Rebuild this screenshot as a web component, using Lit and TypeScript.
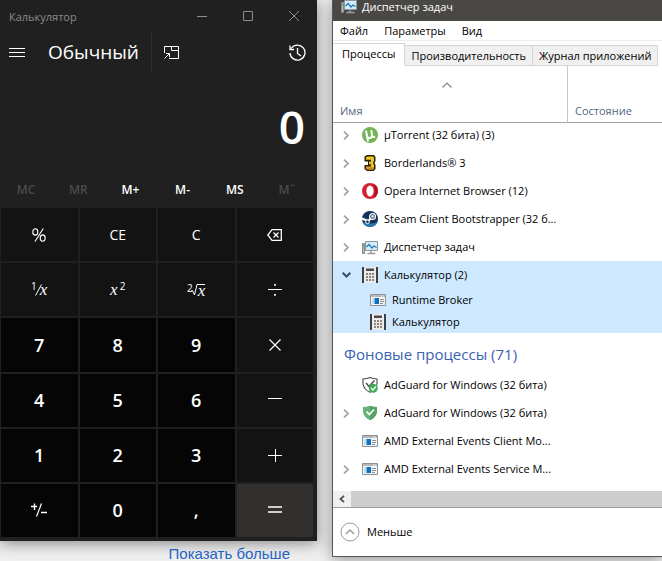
import { LitElement, html, css, svg, TemplateResult } from "lit";
import { customElement, property, state } from "lit/decorators.js";
import { classMap } from "lit/directives/class-map.js";

const FONT = css`"Open Sans", "Noto Sans", sans-serif`;

const reset = css`
  * {
    box-sizing: border-box;
  }
  button {
    margin: 0;
    padding: 0;
    border: 0;
    background: none;
    color: inherit;
    font: inherit;
    display: flex;
    align-items: center;
    justify-content: center;
  }
  svg {
    display: block;
    flex: none;
  }
`;

/* ---------- Calculator glyphs ---------- */

const line = (w: number, h: number, body: TemplateResult) => html`
  <svg width=${w} height=${h} viewBox="0 0 ${w} ${h}" fill="none" stroke="currentColor" aria-hidden="true">${body}</svg>
`;

const glyphs: Record<string, TemplateResult> = {
  backspace: line(15, 12, svg`<path d="M5 .7H14.300V11.300H5L.8 6Z" stroke-width="1.3"/><path d="M6.500 3.500L11.500 8.500M11.500 3.500L6.500 8.500" stroke-width="1.3"/>`),
  divide: line(14, 14, svg`<path d="M0 6.500H14"/><path d="M7 1V2.800M7 11V12.800" stroke-width="1.800"/>`),
  multiply: line(12, 12, svg`<path d="M.5 .5L11.5 11.5M11.5 .5L.5 11.5" stroke-width="1.200"/>`),
  minus: line(14, 14, svg`<path d="M0 5.5H14"/>`),
  plus: line(14, 14, svg`<path d="M0 7.5H14M7.5 1V14"/>`),
  equals: line(14, 14, svg`<path d="M0 4H14M0 9H14" stroke="#d0cecc" stroke-width="2"/>`),
  sign: line(18, 14, svg`<path d="M1 3.5H7M4.500 .5V7" stroke-width="1.400"/><path d="M11.500 .5L6.500 13.5" stroke-width="1.200"/><path d="M11 9.500H17" stroke-width="1.500"/>`),
  percent: line(14, 14, svg`<ellipse cx="3.3" cy="3.900" rx="2.500" ry="3.200" stroke-width="1.100"/><ellipse cx="10.700" cy="10.100" rx="2.500" ry="3.200" stroke-width="1.100"/><path d="M11.300 .5L3 13.500" stroke-width="1.100"/>`),
};

interface Key {
  id: string;
  label: string;
  kind?: "digit" | "equals";
  face: TemplateResult | string;
}

const keys: Key[] = [
  { id: "pct", label: "Процент", face: glyphs.percent },
  { id: "ce", label: "CE", face: "CE" },
  { id: "c", label: "C", face: "C" },
  { id: "back", label: "Удалить", face: glyphs.backspace },
  {
    id: "inv",
    label: "Обратное число",
    face: html`<span class="math"><sup class="tight">1</sup>${line(7, 12, svg`<path d="M6.500 .5L.5 11.5"/>`)}<i class="tucked">x</i></span>`,
  },
  { id: "sq", label: "Квадрат", face: html`<span class="math"><i>x</i><sup class="far">2</sup></span>` },
  {
    id: "root",
    label: "Квадратный корень",
    face: html`<span class="math"><sup class="tight">2</sup>${line(7, 12, svg`<path d="M0 7L1.500 6.500L3.500 11L6 .5H7"/>`)}<i class="under">x</i></span>`,
  },
  { id: "div", label: "Разделить", face: glyphs.divide },
  ...["7", "8", "9"].map((d): Key => ({ id: d, label: d, kind: "digit", face: d })),
  { id: "mul", label: "Умножить", face: glyphs.multiply },
  ...["4", "5", "6"].map((d): Key => ({ id: d, label: d, kind: "digit", face: d })),
  { id: "sub", label: "Вычесть", face: glyphs.minus },
  ...["1", "2", "3"].map((d): Key => ({ id: d, label: d, kind: "digit", face: d })),
  { id: "add", label: "Сложить", face: glyphs.plus },
  { id: "neg", label: "Плюс минус", kind: "digit", face: glyphs.sign },
  { id: "0", label: "0", kind: "digit", face: "0" },
  { id: ",", label: "Запятая", kind: "digit", face: "," },
  { id: "eq", label: "Равно", kind: "equals", face: glyphs.equals },
];

@customElement("calc-window")
export class CalcWindow extends LitElement {
  @state() private value = "0";

  static styles = [
    reset,
    css`
      :host {
        display: flex;
        flex-direction: column;
        background: #202020;
        color: #fff;
        font-family: ${FONT};
        box-shadow: 0 2px 14px rgba(0, 0, 0, 0.45);
      }
      .title {
        display: flex;
        align-items: center;
        height: 32px;
        padding: 0 18px 0 9px;
        color: #8c8c8c;
        font-size: 11px;
      }
      .title span {
        flex: 1;
      }
      .controls {
        display: flex;
        gap: 36px;
      }
      .bar {
        display: flex;
        align-items: center;
        height: 40px;
        padding: 0 11px 0 9px;
      }
      h1 {
        margin: 0 12px 0 23px;
        font-size: 19px;
        line-height: 28px;
        font-weight: 500;
      }
      .pin {
        height: 40px;
        padding: 0 12px;
        border-left: 1px solid #2c2c2c;
      }
      .history {
        margin-left: auto;
      }
      output {
        height: 98px;
        padding: 22px 12px 0 0;
        text-align: right;
        font-size: 46px;
        line-height: 64px;
        font-weight: 600;
      }
      .memory {
        display: grid;
        grid-template-columns: repeat(6, 1fr);
        height: 38px;
        padding-right: 4px;
        font-size: 12px;
        font-weight: 600;
      }
      .memory button:disabled {
        color: #4b4b4b;
      }
      .memory svg {
        margin: 0 0 8px 1px;
      }
      .keys {
        display: grid;
        grid-template-columns: repeat(4, 1fr);
        grid-auto-rows: 1fr;
        gap: 2px;
        height: 333px;
        padding: 0 4px 4px 1px;
      }
      .key {
        background: #131313;
        font-size: 14px;
      }
      .digit {
        background: #050505;
        font-size: 18px;
        font-weight: 600;
      }
      .equals {
        background: #32302f;
      }
      .math {
        display: flex;
        align-items: center;
        line-height: 16px;
      }
      .math i {
        font-family: "Liberation Serif", serif;
        font-size: 17px;
      }
      .math sup {
        align-self: flex-start;
        font-size: 10px;
        line-height: 9px;
      }
      .math .far {
        margin-left: 2px;
      }
      .math .tight {
        margin-right: -2px;
      }
      .math .tucked {
        margin-left: -2px;
      }
      .math .under {
        border-top: 1px solid;
        line-height: 11px;
      }
    `,
  ];

  private press(k: Key) {
    if (/^[\d]$/.test(k.id)) this.value = this.value === "0" ? k.id : this.value + k.id;
    else if (k.id === "," && !this.value.includes(",")) this.value += ",";
    else if (k.id === "c" || k.id === "ce") this.value = "0";
    else if (k.id === "back") this.value = this.value.slice(0, -1) || "0";
  }

  render() {
    return html`
      <header class="title">
        <span>Калькулятор</span>
        <div class="controls">
          <button aria-label="Свернуть">${line(10, 10, svg`<path d="M0 5.5H10"/>`)}</button>
          <button aria-label="Развернуть">${line(10, 10, svg`<path d="M.5 .5H9.5V9.5H.5Z"/>`)}</button>
          <button aria-label="Закрыть">${line(10, 10, svg`<path d="M0 0L10 10M10 0L0 10"/>`)}</button>
        </div>
      </header>
      <div class="bar">
        <button aria-label="Навигация">${line(16, 11, svg`<path d="M0 1.5H16M0 5.5H16M0 9.5H16"/>`)}</button>
        <h1>Обычный</h1>
        <button class="pin" aria-label="Поверх остальных окон">
          ${line(15, 13, svg`<path d="M.5 7V.5H14.5V12.5H5"/><path d="M7.5 .5V4.500H14.5"/><path d="M.5 12.5L5.5 7.5M2 7.5H5.5V11"/>`)}
        </button>
        <button class="history" aria-label="Журнал">
          ${line(17, 17, svg`<path d="M2.2 4.5A7.5 7.5 0 1 1 1 9" stroke-width="1.300"/><path d="M1 1.5V5.5H5M8.5 4V9.5L12 12" stroke-width="1.300"/>`)}
        </button>
      </div>
      <output>${this.value}</output>
      <div class="memory">
        <button disabled>MC</button>
        <button disabled>MR</button>
        <button>M+</button>
        <button>M-</button>
        <button>MS</button>
        <button disabled>M${line(5, 3, svg`<path d="M.5 .5L2.500 2.500L4.500 .5"/>`)}</button>
      </div>
      <div class="keys">
        ${keys.map(
          (k) => html`<button
            class=${classMap({ key: true, digit: k.kind === "digit", equals: k.kind === "equals" })}
            aria-label=${k.label}
            @click=${() => this.press(k)}
          >${k.face}</button>`
        )}
      </div>
    `;
  }
}

/* ---------- Process icons ---------- */

const icon = (body: TemplateResult) => html`<svg width="16" height="16" viewBox="0 0 16 16" aria-hidden="true">${body}</svg>`;

const icons: Record<string, TemplateResult> = {
  utorrent: icon(svg`
    <circle cx="8" cy="8" r="8" fill="#76b355"/>
    <path d="M4 3.5L5 9Q5.5 11.5 8 11Q10.500 10.500 10 8L9.300 3.200M10 8.500Q10.800 10.600 13 9.800M5 9L6 14.500" fill="none" stroke="#fff" stroke-width="2"/>`),
  borderlands: icon(svg`
    <path d="M2.500 1.500L5 0H12L13.500 2V6L12.500 8L13.500 10V14L11.500 16H5L2.500 14V10H6V6.500H2.500Z" fill="#2b2008"/>
    <path d="M4 2.200L5.500 1.500H11L12 2.500V6L10.800 8L12 10V13.500L10.800 14.600H5.500L4 13.500V11.500H9V9.200H7V6.500H9V4.800H4Z" fill="#edc62c"/>
    <path d="M4 12.200H12V13.500L10.800 14.600H5.500L4 13.500Z" fill="#cf8a1a"/>`),
  opera: icon(svg`
    <circle cx="8" cy="8" r="8" fill="#d8202f"/>
    <path d="M11 .6A8 8 0 0 1 11 15.400Q13 12 13 8T11 .6Z" fill="#b3101e"/>
    <ellipse cx="8" cy="8" rx="3.600" ry="5.500" fill="#fff"/>`),
  steam: icon(svg`
    <circle cx="8" cy="8" r="8" fill="#14305c"/>
    <path d="M.8 11A8 8 0 0 0 15.500 11Q8 14 .8 11Z" fill="#2879ae"/>
    <path d="M0 7.500L6 10L10 6.500" fill="none" stroke="#fff" stroke-width="2.200"/>
    <circle cx="10.500" cy="5.500" r="2.900" fill="#14305c" stroke="#fff" stroke-width="1.300"/>
    <circle cx="10.500" cy="5.500" r="1.400" fill="#dfe6ee"/>
    <circle cx="5.500" cy="10.800" r="1.800" fill="#14305c" stroke="#fff"/>`),
  monitor: icon(svg`
    <path d="M.5 4.500H2.500V14.500H.5Z" fill="#b9bdb9" stroke="#868b88"/>
    <path d="M1.500 6V7.500" stroke="#54a060"/>
    <path d="M3.500 2.500H15.500V11.500H3.500Z" fill="#d3ecfb" stroke="#8f9699"/>
    <path d="M4.500 8L7 5.500L10 9L12 7L14.500 8.500" fill="none" stroke="#1b7cb4" stroke-width="1.200"/>
    <path d="M9 12V14M5.500 14.500H13.500" stroke="#9a9f9e" stroke-width="1.400"/>`),
  calculator: icon(svg`
    <path d="M2 0H14V16H2Z" fill="#eeeae7"/>
    <path d="M0 0H2V16H0ZM14 0H16V16H14Z" fill="#3e4247"/>
    <path d="M4 1.500H12V4H4Z" fill="#4c4b4b"/>
    <path d="M4 7H6M7 7H9M10 7H12M4 10H6M7 10H9M10 10H12M4 13H6M7 13H9M10 13H12" stroke="#6a6664" stroke-width="1.500"/>`),
  app: icon(svg`
    <path d="M.5 2.500H15.500V13.500H.5Z" fill="#f4f4f4" stroke="#8e9092"/>
    <path d="M1 3H15V5H1Z" fill="#b6b8ba"/>
    <path d="M11 4H14" stroke="#fff" stroke-dasharray="1 1"/>
    <path d="M2 6H4V12H2Z" fill="#b9dff0"/>
    <path d="M4.500 6H9V12H4.500Z" fill="#0f70c0"/>
    <path d="M10 7.500H14M10 9.500H14M10 11.500H13" stroke="#8d9092"/>`),
  adguardTray: icon(svg`
    <path d="M1 2Q5 2 8 .6Q11 2 15 2V7Q14 12.500 8 15.300Q2 12.500 1 7Z" fill="#fff" stroke="#474a48" stroke-width="1.100"/>
    <path d="M4 6L7 9.500L12.500 3.500" fill="none" stroke="#474a48" stroke-width="1.400"/>
    <circle cx="11.300" cy="11.300" r="4.500" fill="#3fae5c"/>
    <path d="M9 11L11 13L14 9.500" fill="none" stroke="#fff" stroke-width="1.300"/>`),
  adguard: icon(svg`
    <path d="M1 2Q5 2 8 .8Q11 2 15 2V7Q14 12.500 8 15.300Q2 12.500 1 7Z" fill="#67b279"/>
    <path d="M8 .8Q11 2 15 2V7Q14 12.500 8 15.300Z" fill="#57a269"/>
    <path d="M4.500 6.500L7.300 9.500L12 4.500" fill="none" stroke="#fff" stroke-width="1.600"/>`),
};

interface Process {
  icon: string;
  name: string;
  expand?: "closed" | "open";
  child?: boolean;
  selected?: boolean;
}

const apps: Process[] = [
  { icon: "utorrent", name: "µTorrent (32 бита) (3)", expand: "closed" },
  { icon: "borderlands", name: "Borderlands® 3", expand: "closed" },
  { icon: "opera", name: "Opera Internet Browser (12)", expand: "closed" },
  { icon: "steam", name: "Steam Client Bootstrapper (32 б...", expand: "closed" },
  { icon: "monitor", name: "Диспетчер задач", expand: "closed" },
  { icon: "calculator", name: "Калькулятор (2)", expand: "open", selected: true },
  { icon: "app", name: "Runtime Broker", child: true, selected: true },
  { icon: "calculator", name: "Калькулятор", child: true, selected: true },
];

const background: Process[] = [
  { icon: "adguardTray", name: "AdGuard for Windows (32 бита)" },
  { icon: "adguard", name: "AdGuard for Windows (32 бита)", expand: "closed" },
  { icon: "app", name: "AMD External Events Client Mo..." },
  { icon: "app", name: "AMD External Events Service M...", expand: "closed" },
];

@customElement("task-manager")
export class TaskManager extends LitElement {
  @property() activeTab = "Процессы";

  static styles = [
    reset,
    css`
      :host {
        display: flex;
        flex-direction: column;
        min-width: 0;
        border: solid #555;
        border-width: 0 0 1px 1px;
        background: #fff;
        color: #000;
        font-family: ${FONT};
        font-size: 11px;
        line-height: 16px;
        white-space: nowrap;
        overflow: hidden;
        box-shadow: 0 2px 14px rgba(0, 0, 0, 0.4);
      }
      .title {
        display: flex;
        gap: 5px;
        height: 21px;
        padding: 0 8px;
        align-items: flex-start;
        background: #4a4845;
        color: #fff;
      }
      .title span {
        line-height: 13px;
      }
      .title svg {
        margin-top: -2px;
      }
      .menu {
        display: flex;
        gap: 16px;
        height: 20px;
        padding: 0 7px;
        border-bottom: 1px solid #ececec;
      }
      .tabs {
        display: flex;
        align-items: flex-end;
        height: 25px;
      }
      .tab {
        flex: none;
        height: 21px;
        padding: 0 6px;
        border: solid #d4d4d4;
        border-width: 1px 1px 1px 0;
        background: #f0f0f0;
      }
      .tab.active {
        height: 23px;
        padding: 0 9px 2px;
        border-bottom-color: #fff;
        background: #fff;
      }
      table {
        width: 100%;
        table-layout: fixed;
        border-collapse: separate;
        border-spacing: 0;
      }
      .name-col {
        width: 235px;
      }
      th,
      td {
        padding: 0;
        text-align: left;
        font-weight: 400;
      }
      thead th {
        height: 57px;
        padding: 0 7px 3px;
        border-bottom: 1px solid #a5a5a5;
        color: #56657c;
        vertical-align: bottom;
      }
      thead .split {
        padding-right: 14px;
        border-right: 1px solid #c8c8c8;
      }
      .sort {
        display: flex;
        flex-direction: column;
        justify-content: space-between;
        height: 37px;
      }
      .sort svg {
        align-self: center;
      }
      .row {
        display: flex;
        align-items: center;
        height: 28px;
        padding-left: 9px;
      }
      tbody:first-of-type tr:first-child .row {
        height: 26px;
        padding-bottom: 2px;
      }
      .selected {
        background: #cde8ff;
      }
      .child {
        height: 22px;
        padding-left: 17px;
      }
      .expander {
        flex: none;
        width: 9px;
        height: 16px;
        color: #a0a0a0;
      }
      .open {
        color: #33506b;
      }
      .row svg + span {
        margin-left: 6px;
      }
      .row > svg {
        margin-left: 11px;
      }
      .group {
        height: 38px;
        padding: 4px 0 0 11px;
        color: #3a62b0;
        font-size: 15px;
      }
      .scroll {
        display: flex;
        height: 17px;
        margin-top: 8px;
        background: #cdcdcd;
        border-bottom: 1px solid #9f9f9f;
      }
      .scroll button {
        width: 18px;
        background: #f0f0f0;
      }
      footer {
        display: flex;
        align-items: center;
        height: 48px;
        padding-left: 7px;
      }
      .less {
        gap: 7px;
      }
    `,
  ];

  private row(p: Process) {
    return html`
      <tr class=${classMap({ selected: !!p.selected })}>
        <td>
          <div class=${classMap({ row: true, child: !!p.child })}>
            ${p.expand
              ? html`<button class=${classMap({ expander: true, open: p.expand === "open" })} aria-label="Развернуть">
                  ${p.expand === "open"
                    ? line(9, 6, svg`<path d="M.7 .7L4.500 4.500L8.300 .7" stroke-width="2"/>`)
                    : line(7, 9, svg`<path d="M1 .7L5 4.500L1 8.300" stroke-width="1.700"/>`)}
                </button>`
              : html`<span class="expander"></span>`}
            ${icons[p.icon]}<span>${p.name}</span>
          </div>
        </td>
        <td></td>
      </tr>
    `;
  }

  render() {
    return html`
      <header class="title">${icons.monitor}<span>Диспетчер задач</span></header>
      <nav class="menu">${["Файл", "Параметры", "Вид"].map((m) => html`<button>${m}</button>`)}</nav>
      <div class="tabs" role="tablist">
        ${["Процессы", "Производительность", "Журнал приложений"].map(
          (t) => html`<button
            role="tab"
            class=${classMap({ tab: true, active: t === this.activeTab })}
            aria-selected=${t === this.activeTab}
            @click=${() => (this.activeTab = t)}
          >${t}</button>`
        )}
      </div>
      <table>
        <colgroup><col class="name-col" /><col /></colgroup>
        <thead>
          <tr>
            <th class="split">
              <div class="sort">${line(10, 6, svg`<path d="M.5 5.500L5 1L9.500 5.500" stroke="#7c8797" stroke-width="1.200"/>`)}<span>Имя</span></div>
            </th>
            <th>Состояние</th>
          </tr>
        </thead>
        <tbody>${apps.map((p) => this.row(p))}</tbody>
        <tbody>
          <tr><th class="group" colspan="2" scope="rowgroup">Фоновые процессы (71)</th></tr>
          ${background.map((p) => this.row(p))}
        </tbody>
      </table>
      <div class="scroll">
        <button aria-label="Прокрутить влево">${line(6, 8, svg`<path d="M5 .8L1.500 4L5 7.200" stroke="#505050" stroke-width="1.800"/>`)}</button>
      </div>
      <footer>
        <button class="less">
          ${line(20, 20, svg`<circle cx="10" cy="10" r="9" stroke="#9b9b9b"/><path d="M6 12L10 8L14 12" stroke="#9b9b9b" stroke-width="1.500"/>`)}
          <span>Меньше</span>
        </button>
      </footer>
    `;
  }
}

@customElement("app-root")
export class AppRoot extends LitElement {
  static styles = css`
    :host {
      display: grid;
      grid-template-columns: minmax(0, 317fr) minmax(0, 330fr);
      column-gap: 15px;
      align-items: start;
      height: 100vh;
      overflow: hidden;
      background: #efefef;
    }
    .left {
      display: flex;
      flex-direction: column;
    }
    .more {
      align-self: flex-end;
      margin: 6px 27px 0 0;
      color: #2462c4;
      font: 15px/14px "Liberation Sans", Arial, sans-serif;
      text-decoration: none;
    }
  `;

  render() {
    return html`
      <div class="left">
        <calc-window></calc-window>
        <a class="more" href="#more">Показать больше</a>
      </div>
      <task-manager></task-manager>
    `;
  }
}
